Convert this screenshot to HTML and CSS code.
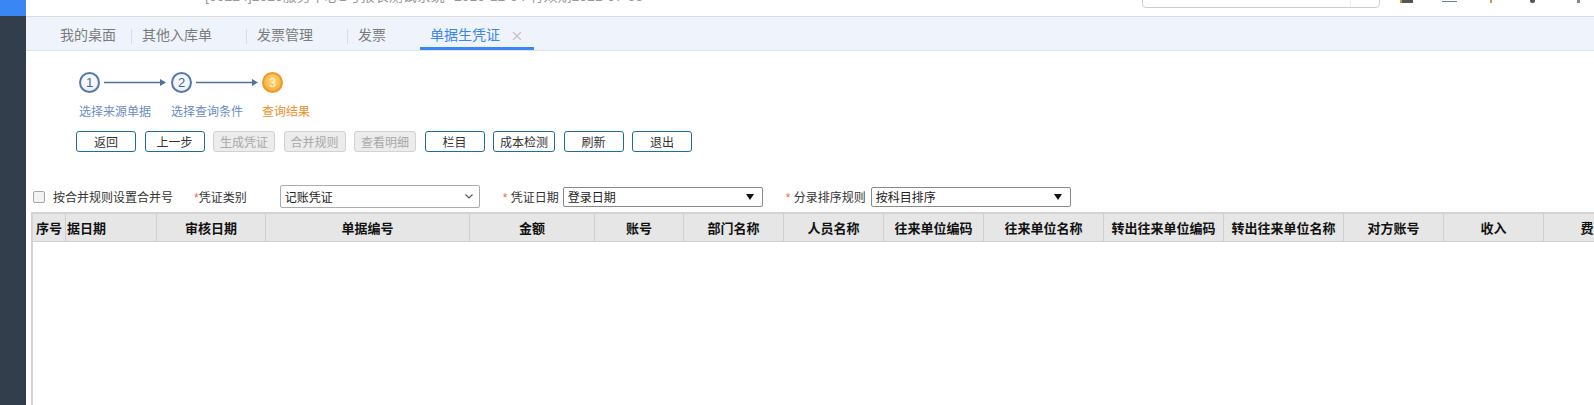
FILE: index.html
```html
<!DOCTYPE html>
<html lang="zh-CN">
<head>
    <meta charset="UTF-8">
    <title>单据生凭证</title>
    <link rel="stylesheet" href="styles.css">
</head>
<body>
    <div class="page">
        <aside class="sidebar">
            <div class="sidebar-logo"></div>
        </aside>

        <div class="main">
            <div class="topbar">
                <span class="top-title">[00224]2020服务中心1号报表测试系统</span>
                <span class="top-date">2020-12-04 有效期2021-07-03</span>
                <div class="top-search"><span class="search-btn"></span></div>
                <div class="top-icons">
                    <i class="ti ti-1"></i>
                    <i class="ti ti-2"></i>
                    <i class="ti ti-3"></i>
                    <i class="ti ti-4"></i>
                    <i class="ti ti-5"></i>
                </div>
            </div>

            <div class="tabbar">
                <div class="tab tab-home">我的桌面</div>
                <span class="tab-sep"></span>
                <div class="tab">其他入库单<span class="tab-close"></span></div>
                <span class="tab-sep"></span>
                <div class="tab">发票管理<span class="tab-close"></span></div>
                <span class="tab-sep"></span>
                <div class="tab">发票<span class="tab-close"></span></div>
                <div class="tab active">单据生凭证<span class="tab-close">
                    <svg width="10" height="10" viewBox="0 0 10 10"><path d="M1 1L9 9M9 1L1 9" stroke="#c4c4c4" stroke-width="1.4" fill="none"/></svg>
                </span></div>
            </div>

            <div class="wizard">
                <div class="steps">
                    <div class="step">
                        <div class="step-head">
                            <span class="step-num">1</span>
                            <svg class="step-arrow" width="62" height="9" viewBox="0 0 62 9"><line x1="0" y1="4.5" x2="57" y2="4.5" stroke="#52709c" stroke-width="1.3"/><polygon points="56,1 62,4.5 56,8" fill="#52709c"/></svg>
                        </div>
                        <div class="step-label">选择来源单据</div>
                    </div>
                    <div class="step">
                        <div class="step-head">
                            <span class="step-num">2</span>
                            <svg class="step-arrow" width="62" height="9" viewBox="0 0 62 9"><line x1="0" y1="4.5" x2="57" y2="4.5" stroke="#52709c" stroke-width="1.3"/><polygon points="56,1 62,4.5 56,8" fill="#52709c"/></svg>
                        </div>
                        <div class="step-label">选择查询条件</div>
                    </div>
                    <div class="step current">
                        <div class="step-head">
                            <span class="step-num">3</span>
                        </div>
                        <div class="step-label">查询结果</div>
                    </div>
                </div>

                <div class="toolbar">
                    <button class="btn">返回</button>
                    <button class="btn">上一步</button>
                    <button class="btn" disabled>生成凭证</button>
                    <button class="btn" disabled>合并规则</button>
                    <button class="btn" disabled>查看明细</button>
                    <button class="btn">栏目</button>
                    <button class="btn">成本检测</button>
                    <button class="btn">刷新</button>
                    <button class="btn">退出</button>
                </div>
            </div>

            <div class="filter-row">
                <span class="check"></span>
                <span class="check-label">按合并规则设置合并号</span>
                <span class="field-label lbl-type"><em>*</em>凭证类别</span>
                <div class="select select-soft">
                    <span>记账凭证</span>
                    <svg width="8" height="5" viewBox="0 0 8 5"><polyline points="0.5,0.5 4,4 7.5,0.5" stroke="#555" stroke-width="1.1" fill="none"/></svg>
                </div>
                <span class="field-label lbl-date"><em>*</em> 凭证日期</span>
                <div class="select select-plain sel-date">
                    <span>登录日期</span>
                    <svg width="8" height="6" viewBox="0 0 8 6"><polygon points="0,0 8,0 4,6" fill="#111"/></svg>
                </div>
                <span class="field-label lbl-sort"><em>*</em> 分录排序规则</span>
                <div class="select select-plain sel-sort">
                    <span>按科目排序</span>
                    <svg width="8" height="6" viewBox="0 0 8 6"><polygon points="0,0 8,0 4,6" fill="#111"/></svg>
                </div>
            </div>

            <div class="grid">
                <div class="grid-head">
                    <div>序号</div>
                    <div class="clip">据日期</div>
                    <div>审核日期</div>
                    <div>单据编号</div>
                    <div>金额</div>
                    <div>账号</div>
                    <div>部门名称</div>
                    <div>人员名称</div>
                    <div>往来单位编码</div>
                    <div>往来单位名称</div>
                    <div>转出往来单位编码</div>
                    <div>转出往来单位名称</div>
                    <div>对方账号</div>
                    <div>收入</div>
                    <div>费用</div>
                </div>
                <div class="grid-body"></div>
            </div>
        </div>
    </div>
</body>
</html>
```

FILE: styles.css
```css
body {
    margin: 0;
    font-family: "Liberation Sans", "Noto Sans CJK SC", sans-serif;
    background: #fff;
    color: #333;
}
.page {
    display: flex;
    height: 100vh;
    overflow: hidden;
}
.sidebar {
    width: 26px;
    flex-shrink: 0;
    background: #333e4d;
}
.sidebar-logo {
    height: 16px;
    background: #3a86f4;
}
.main {
    flex: 1;
    min-width: 0;
    display: flex;
    flex-direction: column;
    overflow: hidden;
}

/* top header, mostly scrolled out of view */
.topbar {
    height: 17px;
    box-sizing: border-box;
    border-bottom: 1px solid #dcdcdc;
    display: flex;
    align-items: flex-start;
    overflow: hidden;
    font-size: 14px;
    color: #999;
}
.top-title {
    margin-left: 179px;
    width: 249px;
    line-height: 14px;
    margin-top: -11px;
    white-space: nowrap;
}
.top-date {
    line-height: 14px;
    margin-top: -11px;
    white-space: nowrap;
}
.top-search {
    margin-left: auto;
    width: 238px;
    height: 20px;
    margin-top: -12px;
    box-sizing: border-box;
    border: 1px solid #cdcdcd;
    border-radius: 4px;
    display: flex;
    justify-content: flex-end;
}
.search-btn {
    width: 28px;
    border-left: 1px solid #ececec;
}
.top-icons {
    width: 194px;
    margin-left: 20px;
    display: flex;
    align-items: flex-start;
}
.ti {
    display: block;
}
.ti-1 {
    width: 13px;
    height: 3px;
    background: #555;
    border-left: 2px solid #e08a3a;
    box-sizing: border-box;
}
.ti-2 {
    width: 15px;
    height: 2px;
    margin-left: 29px;
    border-bottom: 1px solid #6b7f99;
    box-sizing: border-box;
}
.ti-3 {
    width: 2px;
    height: 3px;
    margin-left: 33px;
    background: #e0913f;
}
.ti-4 {
    width: 5px;
    height: 3px;
    margin-left: 38px;
    background: #555;
    border-radius: 0 0 2px 2px;
}
.ti-5 {
    width: 3px;
    height: 3px;
    margin-left: 42px;
    background: #888;
}

/* tabs */
.tabbar {
    height: 34px;
    box-sizing: border-box;
    background: #eff4fc;
    border-bottom: 1px solid #dde2ea;
    display: flex;
    align-items: flex-start;
    padding-left: 24px;
}
.tab {
    height: 33px;
    box-sizing: border-box;
    padding: 7px 0 0 10px;
    line-height: 23px;
    border-bottom: 3px solid transparent;
    font-size: 14px;
    color: #7b7b7b;
    display: flex;
    align-items: flex-start;
    white-space: nowrap;
}
.tab-home {
    padding-right: 15px;
}
.tab-close {
    width: 10px;
    margin: 0 12px;
    height: 23px;
    display: flex;
    align-items: center;
}
.tab.active {
    color: #3a86ee;
    border-bottom-color: #3a86f4;
}
.tab-sep {
    width: 1px;
    height: 15px;
    margin-top: 12px;
    background: #dadde2;
}

/* wizard */
.wizard {
    padding: 21px 0 0 53px;
}
.steps {
    display: flex;
}
.step {
    width: 92px;
}
.step:nth-child(2) {
    width: 91px;
}
.step-head {
    display: flex;
    align-items: center;
    height: 21px;
}
.step-num {
    width: 21px;
    height: 21px;
    box-sizing: border-box;
    border: 2px solid #5877a7;
    border-radius: 50%;
    background: radial-gradient(circle at 50% 40%, #fff, #e6ecf5);
    color: #3c63a0;
    font-size: 13px;
    line-height: 17px;
    text-align: center;
}
.step-arrow {
    margin-left: 4px;
}
.step-label {
    margin-top: 11px;
    font-size: 12px;
    line-height: 16px;
    color: #6a8dc4;
    white-space: nowrap;
}
.step.current .step-num {
    border-color: #eb9a27;
    background: radial-gradient(circle at 50% 40%, #ffd87f, #f6a322);
    color: #fff6dc;
}
.step.current .step-label {
    color: #f0902a;
}

.toolbar {
    display: flex;
    gap: 8.5px;
    margin: 11px 0 0 -3px;
}
.btn {
    height: 21px;
    min-width: 60px;
    box-sizing: border-box;
    padding: 0 6px;
    border: 1px solid #1d6f9b;
    border-radius: 3px;
    background: #fff;
    font-family: "Noto Sans CJK SC", sans-serif;
    font-size: 12px;
    line-height: 19px;
    color: #333;
}
.btn:disabled {
    background: #ececec;
    border-color: #d2d2d2;
    color: #a8a8a8;
}

/* filter row */
.filter-row {
    display: flex;
    align-items: center;
    height: 23px;
    margin-top: 33px;
    padding-left: 7px;
    font-size: 12px;
    color: #333;
    white-space: nowrap;
}
.check {
    width: 12px;
    height: 12px;
    box-sizing: border-box;
    border: 1px solid #a6a6a6;
    border-radius: 2px;
    background: #f3f3f3;
}
.check-label {
    margin-left: 8px;
}
.field-label em {
    font-style: normal;
    color: #f26a46;
}
.lbl-type {
    margin-left: 21px;
}
.lbl-date,
.lbl-sort {
    margin-left: 23px;
}
.select {
    width: 200px;
    box-sizing: border-box;
    display: flex;
    align-items: center;
    justify-content: space-between;
    background: #fff;
    color: #222;
}
.select-soft {
    height: 23px;
    margin-left: 33px;
    border: 1px solid #ababab;
    border-radius: 2px;
    padding: 0 6px 0 4px;
}
.select-plain {
    height: 20px;
    border: 1px solid #8a8a8a;
    border-radius: 2px;
    padding: 0 8px 0 4px;
}
.sel-date {
    margin-left: 4px;
}
.sel-sort {
    margin-left: 5px;
}

/* data grid */
.grid {
    flex: 1;
    margin-top: 4px;
    margin-left: 5px;
    border-left: 2px solid #d4d4d4;
    border-top: 2px solid #d4d4d4;
    display: flex;
    flex-direction: column;
}
.grid-head {
    display: grid;
    grid-template-columns: 33px 91px 109px 204px 125px 89px 100px 100px 100px 120px 120px 120px 100px 100px 100px;
    width: max-content;
    height: 28px;
    box-sizing: border-box;
    background: #e6e6e6;
    border-bottom: 1px solid #cfcfcf;
}
.grid-head > div {
    border-right: 1px solid #cfcfcf;
    font-family: "Noto Sans CJK SC", sans-serif;
    font-size: 13px;
    font-weight: bold;
    color: #111;
    line-height: 27px;
    text-align: center;
    white-space: nowrap;
    overflow: hidden;
}
.grid-head > .clip {
    text-align: left;
    padding-left: 1px;
}
.grid-body {
    flex: 1;
    background: #fff;
}
```
